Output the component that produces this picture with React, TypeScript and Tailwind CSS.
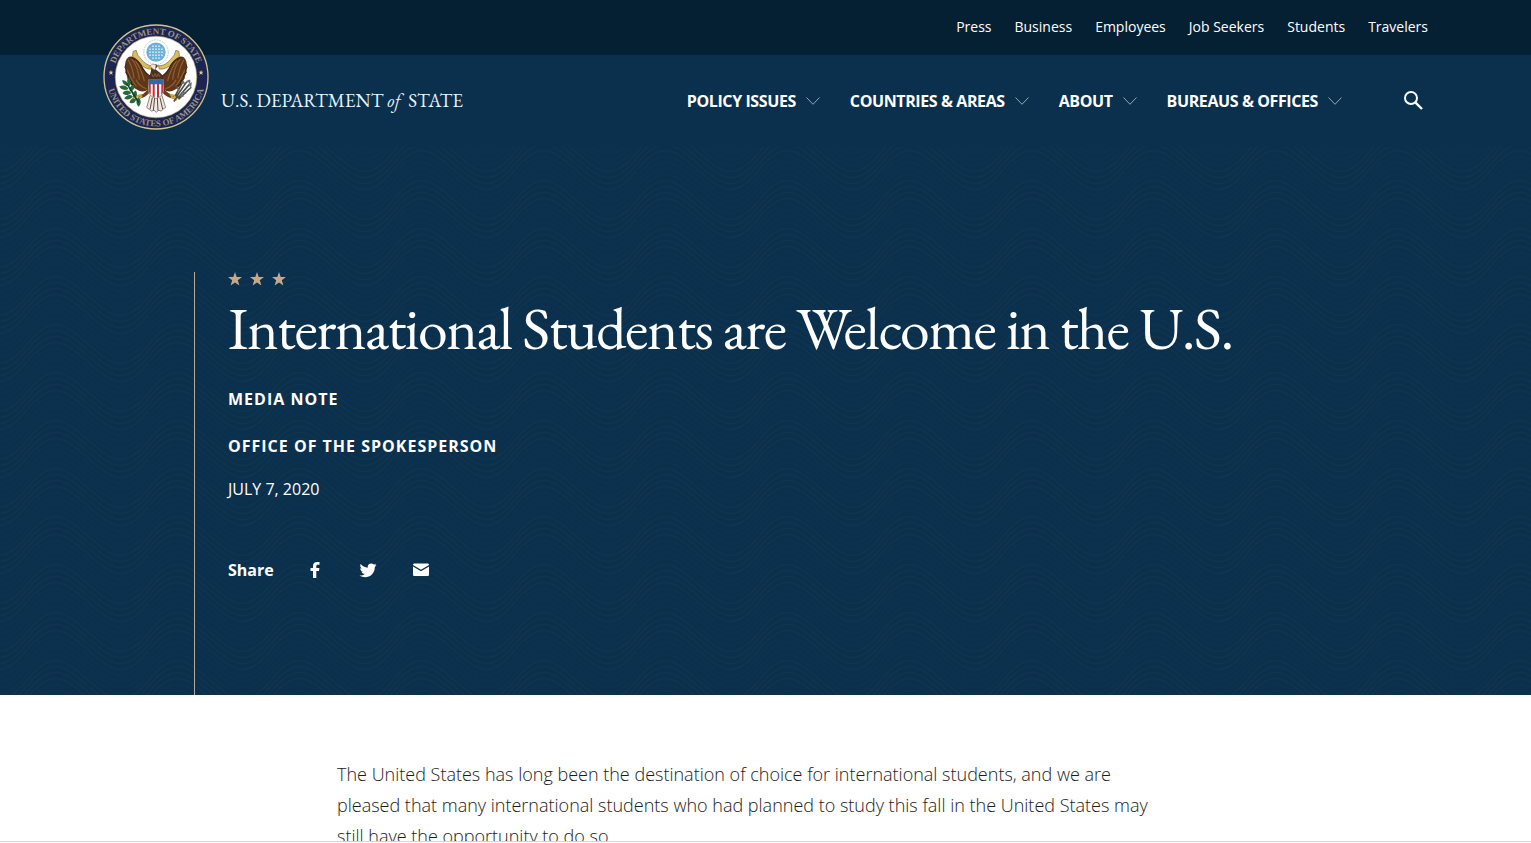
import type { ReactNode } from "react";

const utilityLinks = ["Press", "Business", "Employees", "Job Seekers", "Students", "Travelers"];
const menuItems = ["POLICY ISSUES", "COUNTRIES & AREAS", "ABOUT", "BUREAUS & OFFICES"];
const waveRows = [-48, -42, -36, -30, -24, -18, -12, -6, 0, 6, 12, 18, 24, 30, 36, 42, 48, 54, 60, 66, 72, 78, 84, 90];

function Wing() {
  return (
    <g>
      <path
        d="M164 182 C152 178 147 168 141 156 C135 142 122 126 104 122 C94 123 88 134 88 148 C86 164 91 180 98 192 C102 206 112 216 123 222 C134 230 147 230 158 222 Z"
        fill="#5e371b"
      />
      <path
        d="M97 132 C106 148 112 164 115 188 M107 129 C119 142 127 160 131 192 M118 134 C131 150 138 168 146 196 M93 160 C101 178 108 196 122 212 M120 192 C128 206 138 216 152 219"
        fill="none"
        stroke="#94602f"
        strokeWidth="3.5"
      />
      <path d="M90 146 L87 156 L93 162 L90 172 L98 178 L96 189 L106 196 L107 206 L118 210" fill="none" stroke="#35200f" strokeWidth="3" />
      <path d="M105 124 C122 129 134 144 141 158 C148 170 154 177 163 181" fill="none" stroke="#3f2412" strokeWidth="4" />
    </g>
  );
}

function Seal() {
  return (
    <svg viewBox="21 24 320 320" className="size-[106px] shrink-0" role="img" aria-label="Department of State seal">
      <defs>
        <path id="seal-top" d="M52 184 A129 129 0 0 1 310 184" />
        <path id="seal-bottom" d="M32 184 A149 149 0 0 0 330 184" />
      </defs>
      <circle cx="181" cy="184" r="157" fill="#1c2552" stroke="#cfc391" strokeWidth="4" />
      <circle cx="181" cy="184" r="123" fill="#fff" stroke="#b9ac7b" strokeWidth="2" />
      <g fill="#9b9483" fontFamily="'Liberation Serif', serif" fontSize="27" fontWeight="700" textAnchor="middle">
        <text>
          <textPath href="#seal-top" startOffset="50%">DEPARTMENT OF STATE</textPath>
        </text>
        <text>
          <textPath href="#seal-bottom" startOffset="50%">UNITED STATES OF AMERICA</textPath>
        </text>
      </g>
      <path d="M45 163 l2 5 5 0 -4 4 2 6 -5 -4 -5 4 2 -6 -4 -4 5 0z M317 163 l2 5 5 0 -4 4 2 6 -5 -4 -5 4 2 -6 -4 -4 5 0z" fill="#d6c98f" />

      <circle cx="181" cy="109" r="37" fill="#fff" stroke="#a9c7d8" strokeWidth="3" strokeDasharray="5 3" />
      <circle cx="181" cy="109" r="29" fill="#6fb0d6" />
      <g fill="#d8eefa">
        {[-18, -9, 0, 9, 18].map((y) =>
          [-18, -9, 0, 9, 18].map((x) =>
            x * x + y * y < 600 ? <circle key={`${x},${y}`} cx={181 + x} cy={109 + y} r="2.6" /> : null,
          ),
        )}
      </g>

      <path d="M112 107 L121 103 L126 118 C134 126 140 137 151 144 C161 150 168 151 174 149 L170 160 C153 162 137 151 128 138 C122 129 116 126 110 122 Z" fill="#d9bd63" stroke="#816226" strokeWidth="2" />
      <path d="M250 107 L241 103 L236 118 C228 126 222 137 211 144 C203 149 195 151 188 149 L191 160 C209 162 225 151 234 138 C240 129 246 126 252 122 Z" fill="#d9bd63" stroke="#816226" strokeWidth="2" />

      <Wing />
      <g transform="translate(362 0) scale(-1 1)">
        <Wing />
      </g>

      <path d="M163 240 L199 240 L210 276 L201 282 L197 287 L189 284 L182 291 L175 284 L168 287 L161 282 L153 276 Z" fill="#eee9e1" stroke="#5b4a3a" strokeWidth="2" />
      <path d="M170 246 L163 281 M177 246 L173 285 M185 246 L187 285 M193 246 L201 281" stroke="#55483e" strokeWidth="3" />
      <path d="M164 221 C154 231 149 240 133 244 M198 221 C208 231 213 240 232 244" fill="none" stroke="#6b3d1c" strokeWidth="10" strokeLinecap="round" />
      <path d="M137 238 L116 243 L111 250 M137 244 L121 250 M225 238 L247 242 L250 250 M228 244 L242 252" fill="none" stroke="#cca53c" strokeWidth="6" strokeLinecap="round" />

      <path d="M161 194 C159 181 166 172 166 163 C167 151 174 145 184 147 C188 150 187 155 179 158 C181 163 196 171 201 180 L203 194 Z" fill="#4b3020" />
      <path d="M181 148 C173 143 165 146 161 153 C166 152 169 155 171 160 L179 163 Z" fill="#efe7d5" stroke="#78603e" strokeWidth="1.5" />
      <path d="M163 151 L155 156 L165 158 Z" fill="#d9a92d" />
      <path d="M168 174 L173 184 L178 174 L183 184 L188 174 L193 184" fill="none" stroke="#88613c" strokeWidth="3" />

      <path d="M158 192 H204 V224 C204 237 195 243 181 249 C167 243 158 237 158 224 Z" fill="#fff" />
      <path d="M160 204 H165 V237 L160 230 Z M171 204 H177 V246 L171 242 Z M184 204 H190 V244 L184 247 Z M197 204 H202 V230 L197 238 Z" fill="#c6293c" />
      <path d="M158 192 H204 V206 H158 Z" fill="#3767a8" />
      <path d="M158 192 H204 V224 C204 237 195 243 181 249 C167 243 158 237 158 224 Z" fill="none" stroke="#75664e" strokeWidth="2" />

      <g fill="#28693b">
        <path d="M96 187 C107 192 108 205 101 211 C94 204 92 196 96 187 Z" />
        <path d="M79 194 C91 194 98 202 99 212 C88 212 80 205 79 194 Z" />
        <path d="M70 213 C82 206 94 211 98 220 C86 226 76 223 70 213 Z" />
        <path d="M116 207 C118 219 111 228 102 228 C99 217 105 209 116 207 Z" />
        <path d="M80 232 C89 221 101 223 106 232 C97 241 86 240 80 232 Z" />
        <path d="M85 249 C91 238 103 235 111 243 C105 252 94 255 85 249 Z" />
        <path d="M120 225 C127 235 123 244 115 247 C108 238 110 230 120 225 Z" />
        <path d="M101 261 C103 249 114 246 121 252 C119 262 110 267 101 261 Z" />
        <path d="M128 246 C137 253 137 264 129 274 C120 266 120 255 128 246 Z" />
      </g>
      <path d="M93 204 C103 219 112 236 129 261" fill="none" stroke="#164527" strokeWidth="5" />
      <path d="M241 246 L274 198 M246 248 L281 207 M250 250 L284 218 M239 241 L262 199 M235 258 L245 243" stroke="#4c4d4b" strokeWidth="5" />
      <path d="M274 198 l8 -3 0 9 M281 209 l5 -4 -1 9 M284 220 l3 -6 M258 204 l5 -6 4 7 M251 225 l-6 -10 M258 231 l14 2 M252 240 l12 2" fill="none" stroke="#6a6e6b" strokeWidth="5" />
    </svg>
  );
}

function WavePattern() {
  return (
    <svg aria-hidden="true" className="absolute inset-0 -z-10 size-full">
      <defs>
        <pattern id="waves" width="122" height="48" patternUnits="userSpaceOnUse" x="27" y="8">
          <g fill="none" stroke="#16364f" strokeWidth="1.5">
            {waveRows.map((y) => (
              <path
                key={y}
                d={`M0 ${y} C24 ${y - 30} 36 ${y - 22} 61 ${y} S98 ${y + 30} 122 ${y}`}
                opacity={(y + 48) % 48 < 24 ? 0.5 : 0.2}
              />
            ))}
          </g>
        </pattern>
      </defs>
      <rect width="100%" height="100%" fill="url(#waves)" />
    </svg>
  );
}

function Star() {
  return (
    <svg viewBox="0 0 14 14" className="size-3.5" fill="#c5a98a">
      <path d="M7 0 L8.7 5 H14 L9.8 8.2 L11.4 13.6 L7 10.4 L2.6 13.6 L4.2 8.2 L0 5 H5.3 Z" />
    </svg>
  );
}

function ShareLink({ label, children }: { label: string; children: ReactNode }) {
  return (
    <a href="#share" aria-label={label} className="flex w-[18px] justify-center">
      <svg viewBox="0 0 18 18" className="size-[18px]" fill="#fff">
        {children}
      </svg>
    </a>
  );
}

export default function App() {
  return (
    <div className="flex h-screen flex-col overflow-hidden bg-white font-['Open_Sans','Noto_Sans',sans-serif] text-white">
      <div className="relative isolate shrink-0 bg-[#0a304d]">
        <header>
          <div className="h-[55px] bg-[#062033] px-[103px]">
            <nav aria-label="Audiences" className="flex h-[53px] items-center justify-end gap-[23px] text-sm">
              {utilityLinks.map((link) => (
                <a key={link} href="#audience">
                  {link}
                </a>
              ))}
            </nav>
          </div>
          <div className="flex h-[92px] items-center justify-between bg-[#0a304d] px-[103px]">
            <a href="#home" className="-mt-[31px] flex shrink-0 items-end gap-3 self-start">
              <Seal />
              <span className="pb-[15px] font-['EB_Garamond','Liberation_Serif',serif] text-[19px] leading-7 whitespace-nowrap text-[#e9f3fa]">
                U.S. DEPARTMENT <i className="mr-1">of</i> STATE
              </span>
            </a>
            <div className="flex items-center">
              <nav aria-label="Main" className="flex gap-[30px]">
                {menuItems.map((item) => (
                  <button key={item} type="button" className="flex items-center gap-2.5 text-base font-bold tracking-tight whitespace-nowrap">
                    {item}
                    <svg viewBox="0 0 14 8" className="h-2 w-3.5" fill="none" stroke="#8fa9bb" strokeWidth="1">
                      <path d="M0.5 0.5 L7 7.3 L13.5 0.5" />
                    </svg>
                  </button>
                ))}
              </nav>
              <button type="button" aria-label="Search" className="ml-[58px] flex size-7 items-center justify-center">
                <svg viewBox="0 1 20 20" className="size-5" fill="none" stroke="#fff" strokeWidth="2">
                  <circle cx="7" cy="8" r="6" />
                  <path d="M11.3 12.3 L18 19" strokeWidth="2.4" />
                </svg>
              </button>
            </div>
          </div>
        </header>
        <WavePattern />
        <section className="mt-[125px] ml-[194px] h-[423px] border-l border-[#b5aa9b] pl-[33px]">
          <div className="flex gap-2">
            <Star />
            <Star />
            <Star />
          </div>
          <h1 className="mt-2.5 font-['EB_Garamond','Liberation_Serif',serif] text-6xl leading-[64px] tracking-tight whitespace-nowrap">
            International Students are Welcome in the U.S.
          </h1>
          <p className="mt-[27px] text-base leading-6 font-bold tracking-[1px]">MEDIA NOTE</p>
          <p className="mt-[23px] text-base leading-6 font-bold tracking-[1px]">OFFICE OF THE SPOKESPERSON</p>
          <p className="mt-[19px] text-base leading-6">JULY 7, 2020</p>
          <div className="mt-[57px] flex items-center gap-8">
            <span className="text-base leading-6 font-bold">Share</span>
            <div className="flex gap-[35px]">
              <ShareLink label="Share on Facebook">
                <path d="M7 17 V10 H4.5 V7 H7 V5.2 C7 2.4 8.5 1 11 1 H13.5 V3.8 H12 C10.7 3.8 10.3 4.3 10.3 5.4 V7 H13.4 L13 10 H10.3 V17 Z" />
              </ShareLink>
              <ShareLink label="Share on Twitter">
                <path d="M17.5 4 C16.9 4.3 16.2 4.5 15.5 4.6 C16.2 4.2 16.8 3.5 17 2.7 C16.3 3.1 15.6 3.4 14.8 3.6 A3.5 3.5 0 0 0 8.8 6.7 C5.9 6.6 3.4 5.2 1.7 3.1 C0.8 4.6 1.3 6.6 2.8 7.6 C2.2 7.6 1.7 7.4 1.2 7.2 C1.2 8.9 2.4 10.2 4 10.6 C3.5 10.7 3 10.7 2.4 10.6 C2.9 12 4.1 13 5.7 13 C4.2 14.2 2.4 14.7 0.5 14.5 C7.5 18.9 16 14.2 15.8 5.9 C16.5 5.4 17.1 4.8 17.5 4 Z" />
              </ShareLink>
              <ShareLink label="Share by email">
                <path d="M1 4 C1 3 1.6 2.4 2.5 2.4 H15.5 C16.4 2.4 17 3 17 4 L9 8.8 Z M1 5.4 L9 10.2 L17 5.4 V13.5 C17 14.5 16.4 15.1 15.5 15.1 H2.5 C1.6 15.1 1 14.5 1 13.5 Z" />
              </ShareLink>
            </div>
          </div>
        </section>
      </div>
      <main className="min-h-0 flex-1 overflow-hidden px-[337px] pt-16">
        <p className="max-w-[830px] text-lg leading-[31px] font-light text-[#1b1b1b]">
          The United States has long been the destination of choice for international students, and we are pleased that many
          international students who had planned to study this fall in the United States may still have the opportunity to do so.
        </p>
      </main>
      <div className="h-0.5 shrink-0 border-t border-[#d5d5d5]" />
    </div>
  );
}
